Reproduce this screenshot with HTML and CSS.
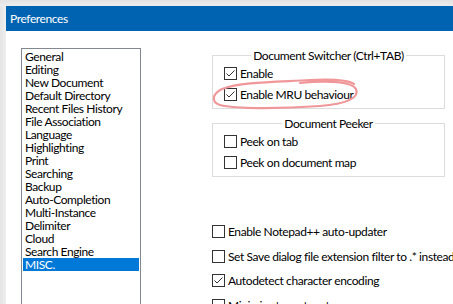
FILE: index.html
```html
<!DOCTYPE html>
<html>
<head>
<meta charset="utf-8">
<title>Preferences</title>
<link rel="stylesheet" href="styles.css">
</head>
<body>

<div class="desk">
  <div class="shade-top"></div>
  <div class="frame">
    <div class="shade-left"></div>

    <div class="window">
      <div class="titlebar">Preferences</div>

      <div class="content">
        <ul class="catlist">
          <li>General</li>
          <li>Editing</li>
          <li>New Document</li>
          <li>Default Directory</li>
          <li>Recent Files History</li>
          <li>File Association</li>
          <li>Language</li>
          <li>Highlighting</li>
          <li>Print</li>
          <li>Searching</li>
          <li>Backup</li>
          <li>Auto-Completion</li>
          <li>Multi-Instance</li>
          <li>Delimiter</li>
          <li>Cloud</li>
          <li>Search Engine</li>
          <li class="selected">MISC.</li>
        </ul>

        <div class="panel">
          <fieldset class="group">
            <legend>Document Switcher (Ctrl+TAB)</legend>
            <div class="opt"><span class="box checked"></span>Enable</div>
            <div class="opt"><span class="box checked"></span>Enable MRU behaviour</div>
          </fieldset>

          <fieldset class="group second">
            <legend>Document Peeker</legend>
            <div class="opt"><span class="box"></span>Peek on tab</div>
            <div class="opt"><span class="box"></span>Peek on document map</div>
          </fieldset>

          <div class="misc">
            <div class="opt wide"><span class="box"></span>Enable Notepad++ auto-updater</div>
            <div class="opt wide"><span class="box"></span>Set Save dialog file extension filter to .* instead of .txt</div>
            <div class="opt wide"><span class="box checked"></span>Autodetect character encoding</div>
            <div class="opt wide"><span class="box"></span>Minimize to system tray</div>
          </div>
        </div>
      </div>
    </div>
  </div>
</div>

<!-- hand drawn mark round the MRU option -->
<svg class="scribble" width="453" height="304" viewBox="0 0 453 304">
  <filter id="soft"><feGaussianBlur stdDeviation="0.6"/></filter>
  <g filter="url(#soft)" fill="none" stroke="#f0979a" stroke-width="2.2" stroke-linecap="round">
    <path d="M300 83 C330 80 352 82 356 89 C360 98 346 104 320 106 C280 109 235 109 220 105 C211 102 212 94 222 89 C240 82 275 82 310 80 C330 79 348 80 354 84"/>
  </g>
</svg>

<script>
// tick mark for every checked box
var boxes = document.querySelectorAll(".box.checked");
for (var i = 0; i < boxes.length; i++) {
    boxes[i].innerHTML = '<svg width="11" height="11" viewBox="0 0 11 11"><path d="M1.5 5.5 L4 8 L9.5 2.5" fill="none" stroke="#333" stroke-width="1"/></svg>';
}
</script>

</body>
</html>
```

FILE: styles.css
```css
html, body {
    margin: 0;
    padding: 0;
    width: 453px;
    height: 304px;
    overflow: hidden;
    background: #fff;
}

body {
    font-family: Lato, "Noto Sans", sans-serif;
    font-size: 12px;
    letter-spacing: -0.4px;
    color: #000;
}

.desk {
    display: flex;
    flex-direction: column;
    height: 100%;
}

.shade-top {
    height: 6px;
    flex-shrink: 0;
    background: linear-gradient(#e2e2e2, #ededed);
}

.frame {
    display: flex;
    flex: 1;
    min-height: 0;
}

.shade-left {
    width: 6px;
    flex-shrink: 0;
    background: linear-gradient(to right, #e4e4e4, #efefef);
}

.window {
    flex: 1;
    display: flex;
    flex-direction: column;
    background: #fff;
    min-width: 0;
}

.titlebar {
    height: 25px;
    flex-shrink: 0;
    line-height: 25px;
    padding-left: 4px;
    background: #0063b1;
    color: #fff;
}

.content {
    display: flex;
    flex: 1;
    padding: 17px 0 0 15px;
    white-space: nowrap;
}

.catlist {
    box-sizing: border-box;
    width: 120px;
    height: 300px;
    margin: 0;
    padding: 1px 1px 0 1px;
    list-style: none;
    border: 1px solid #828790;
    flex-shrink: 0;
}

.catlist li {
    height: 13px;
    line-height: 13px;
    padding-left: 2px;
}

.catlist li.selected {
    background: #0078d7;
    color: #fff;
}

.panel {
    margin-left: 71px;
    padding-top: 1px;
}

.group {
    box-sizing: border-box;
    width: 233px;
    margin: 0;
    padding: 1px 11px 3px 11px;
    border: 1px solid #dcdcdc;
}

.group.second {
    margin-top: 8px;
}

.group legend {
    margin: 0 auto;
    padding: 0 2px;
    line-height: 13px;
}

.opt {
    display: flex;
    align-items: center;
    height: 21px;
}

.opt.wide {
    height: 24.7px;
}

.misc {
    margin-top: 42px;
}

.box {
    box-sizing: border-box;
    width: 13px;
    height: 13px;
    margin-right: 3px;
    border: 1px solid #333;
    background: #fff;
    flex-shrink: 0;
    display: flex;
    align-items: center;
    justify-content: center;
}

.scribble {
    position: absolute;
    left: 0;
    top: 0;
    pointer-events: none;
}
```
